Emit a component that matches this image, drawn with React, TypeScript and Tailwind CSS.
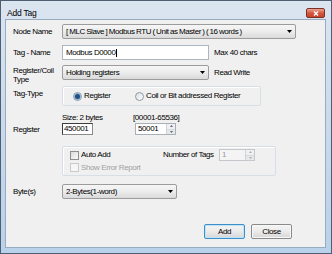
import React from 'react';

const font = { fontFamily: '"Liberation Sans", Arial, sans-serif' };

function Combo({ text, className, textClass = '' }: { text: string; className: string; textClass?: string }) {
  return (
    <div className={`flex items-center h-[15px] border border-[#9c9c9c] rounded-[2px] bg-gradient-to-b from-[#f6f6f6] via-[#ececec] to-[#dadada] ${className}`}>
      <span className={`flex-1 pl-[3px] leading-none whitespace-nowrap overflow-hidden ${textClass}`}>{text}</span>
      <span className="w-[12px] h-full flex items-center justify-center">
        <svg width="5" height="3" viewBox="0 0 5 3"><path d="M0 0h5L2.5 3z" fill="#000" /></svg>
      </span>
    </div>
  );
}

function Spinner({ value, className, disabled }: { value: string; className: string; disabled?: boolean }) {
  return (
    <div className={`flex h-[12px] border ${disabled ? 'border-[#c4c8cc] bg-[#f4f4f4] text-[#9a9a9a]' : 'border-[#a9b0b8] bg-white'} ${className}`}>
      <span className="flex-1 pl-[2px] leading-[10px]">{value}</span>
      <span className="w-[9px] flex flex-col border-l border-[#cfd3d7]">
        <span className="flex-1 flex items-center justify-center border-b border-[#d6d9dc] bg-[#f0f0f0]">
          <svg width="3" height="2" viewBox="0 0 3 2"><path d="M1.5 0L3 2H0z" fill={disabled ? '#b0b0b0' : '#5a6a7a'} /></svg>
        </span>
        <span className="flex-1 flex items-center justify-center bg-[#e8e8e8]">
          <svg width="3" height="2" viewBox="0 0 3 2"><path d="M0 0h3L1.5 2z" fill={disabled ? '#b0b0b0' : '#5a6a7a'} /></svg>
        </span>
      </span>
    </div>
  );
}

function Radio({ checked, label, className = '' }: { checked?: boolean; label: string; className?: string }) {
  return (
    <div className={`flex items-center gap-[2px] whitespace-nowrap ${className}`}>
      <span className="w-[9px] h-[9px] rounded-full border border-[#8e9aa6] bg-gradient-to-br from-[#d8dde2] to-[#ffffff] flex items-center justify-center">
        {checked && <span className="w-[5px] h-[5px] rounded-full bg-[#24507f] ring-1 ring-[#8fb4d8]" />}
      </span>
      <span className="leading-none">{label}</span>
    </div>
  );
}

function Check({ label, disabled }: { label: string; disabled?: boolean }) {
  return (
    <div className="flex items-center gap-[2px] whitespace-nowrap">
      <span className={`w-[9px] h-[9px] border ${disabled ? 'border-[#cacaca] bg-[#f6f6f6]' : 'border-[#8e8f8f] bg-gradient-to-br from-[#dcdcdc] to-[#fbfbfb]'}`} />
      <span className={`leading-none ${disabled ? 'text-[#a0a0a0]' : ''}`}>{label}</span>
    </div>
  );
}

function Btn({ label, primary }: { label: string; primary?: boolean }) {
  return (
    <div className={`w-[41px] h-[15px] rounded-[2px] border ${primary ? 'border-[#3c8fc8] shadow-[inset_0_0_0_1px_#bfe3f7]' : 'border-[#8a8a8a] shadow-[inset_0_0_0_1px_#f8f8f8]'} bg-gradient-to-b from-[#f4f4f4] via-[#ebebeb] to-[#d6d6d6] flex items-center justify-center leading-none`}>
      {label}
    </div>
  );
}

export default function App() {
  return (
    <div className="w-[332px] h-[254px] bg-white overflow-hidden" style={font}>
      <div className="w-full h-full border border-[#4f5e70] bg-gradient-to-b from-[#dbe5f0] via-[#c9daec] to-[#b9d1ea] flex flex-col text-black text-[8px] tracking-[-0.4px]">
        {/* title bar */}
        <div className="h-[18px] flex items-start pl-[6px] pr-[6px]">
          <span className="mt-[8px] leading-[8px] text-[8.5px] tracking-[-0.2px]">Add Tag</span>
          <div className="ml-auto mt-[7px] w-[19px] h-[10px] rounded-[2px] border border-[#7b3226] bg-gradient-to-b from-[#eaa493] via-[#d3573f] to-[#c9452c] flex items-center justify-center">
            <svg width="6" height="5" viewBox="0 0 6 5"><path d="M1 0.5L5 4.5M5 0.5L1 4.5" stroke="#fff" strokeWidth="1.4" /></svg>
          </div>
        </div>

        {/* client area */}
        <div className="ml-[4px] mr-[5px] mb-[5px] flex-1 border border-[#98abc1] bg-[#f0f0f0] pl-[7px] whitespace-nowrap">
          {/* Node name */}
          <div className="flex items-center mt-[4px]">
            <span className="w-[49px]">Node Name</span>
            <Combo text="[ MLC Slave ] Modbus RTU ( Unit as Master ) ( 16 words )" className="w-[234px]" textClass="[word-spacing:-0.5px]" />
          </div>

          {/* Tag name */}
          <div className="flex items-center mt-[6px]">
            <span className="w-[49px]">Tag - Name</span>
            <div className="w-[147px] h-[15px] border border-[#abb6c2] bg-white pl-[3px] flex items-center leading-none">
              Modbus D0000<span className="w-px h-[8px] bg-black ml-[0.5px]" />
            </div>
            <span className="ml-[5px]">Max 40 chars</span>
          </div>

          {/* Register/coil type */}
          <div className="flex items-start h-[15px] mt-[5px]">
            <span className="w-[49px] leading-[8.5px] mt-[2px] whitespace-normal">Register/Coil<br />Type</span>
            <Combo text="Holding  registers" className="w-[147px]" />
            <span className="ml-[5px] mt-[4px] leading-none">Read Write</span>
          </div>

          {/* Tag type */}
          <div className="flex items-center mt-[6px]">
            <span className="w-[49px] mt-[-5px]">Tag-Type</span>
            <div className="w-[199px] h-[20px] border border-[#d5dfe5] rounded-[2px] shadow-[inset_1px_1px_0_#ffffff] flex items-center pl-[10px]">
              <Radio checked label="Register" className="w-[62px]" />
              <Radio label="Coil or Bit addressed Register" />
            </div>
          </div>

          {/* Register */}
          <div className="flex mt-[7px]">
            <span className="w-[49px] mt-[11px]">Register</span>
            <div className="flex flex-col w-[71px]">
              <span className="leading-[10px] h-[10px]">Size: 2 bytes</span>
              <div className="w-[31px] h-[12px] border border-[#3d3d3d] border-r-[#8a8a8a] border-b-[#8a8a8a] bg-white pl-[1px] leading-[10px]">450001</div>
            </div>
            <div className="flex flex-col">
              <span className="leading-[10px] h-[10px]">[00001-65536]</span>
              <Spinner value="50001" className="w-[41px] ml-[2px]" />
            </div>
          </div>

          {/* auto add group */}
          <div className="ml-[49px] mt-[10px] w-[214px] h-[30px] border border-[#d5dfe5] rounded-[2px] shadow-[inset_1px_1px_0_#ffffff] pl-[7px] pt-[2px]">
            <div className="flex items-center">
              <div className="w-[93px]">
                <Check label="Auto Add" />
              </div>
              <span>Number of Tags</span>
              <Spinner value="1" disabled className="ml-auto mr-[20px] w-[36px]" />
            </div>
            <div className="mt-[2px]">
              <Check label="Show Error Report" disabled />
            </div>
          </div>

          {/* bytes */}
          <div className="flex items-center mt-[8px]">
            <span className="w-[49px]">Byte(s)</span>
            <Combo text="2-Bytes(1-word)" className="w-[115px]" />
          </div>

          {/* buttons */}
          <div className="flex justify-end gap-[6px] mt-[25px] pr-[33px]">
            <Btn label="Add" primary />
            <Btn label="Close" />
          </div>
        </div>
      </div>
    </div>
  );
}
